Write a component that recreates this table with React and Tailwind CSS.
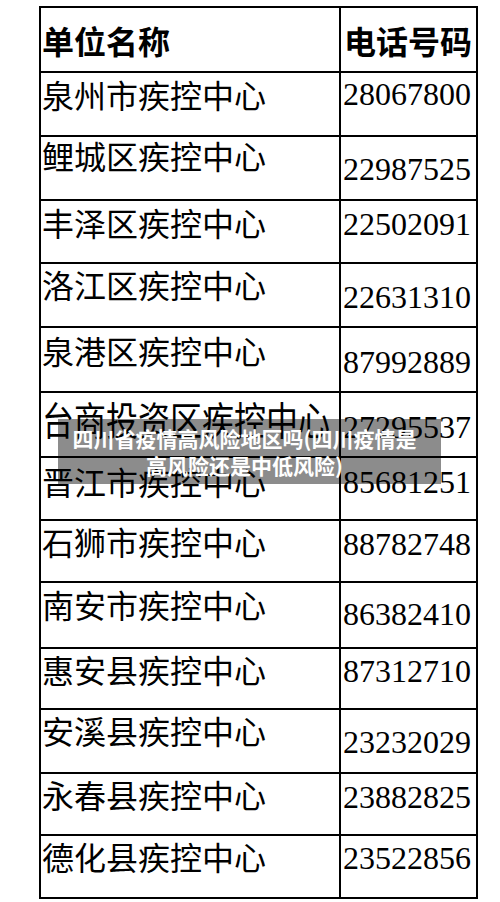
import React from "react";

const rows = [
  { name: "泉州市疾控中心", phone: "28067800", h: "h-[64px]", np: "pt-[5px]", pp: "pt-[5px]" },
  { name: "鲤城区疾控中心", phone: "22987525", h: "h-[64px]", np: "pt-[2px]", pp: "pt-[16px]" },
  { name: "丰泽区疾控中心", phone: "22502091", h: "h-[63px]", np: "pt-[5px]", pp: "pt-[7px]" },
  { name: "洛江区疾控中心", phone: "22631310", h: "h-[64px]", np: "pt-[4px]", pp: "pt-[17px]" },
  { name: "泉港区疾控中心", phone: "87992889", h: "h-[65px]", np: "pt-[6px]", pp: "pt-[18px]" },
  { name: "台商投资区疾控中心", phone: "27295537", h: "h-[65px]", np: "pt-[6px]", pp: "pt-[18px]", tall: true },
  { name: "晋江市疾控中心", phone: "85681251", h: "h-[63px]", np: "pt-[7px]", pp: "pt-[8px]" },
  { name: "石狮市疾控中心", phone: "88782748", h: "h-[62px]", np: "pt-[4px]", pp: "pt-[7px]" },
  { name: "南安市疾控中心", phone: "86382410", h: "h-[66px]", np: "pt-[5px]", pp: "pt-[15px]" },
  { name: "惠安县疾控中心", phone: "87312710", h: "h-[61px]", np: "pt-[4px]", pp: "pt-[6px]" },
  { name: "安溪县疾控中心", phone: "23232029", h: "h-[64px]", np: "pt-[4px]", pp: "pt-[16px]" },
  { name: "永春县疾控中心", phone: "23882825", h: "h-[62px]", np: "pt-[4px]", pp: "pt-[7px]" },
  { name: "德化县疾控中心", phone: "23522856", h: "h-[63px]", np: "pt-[4px]", pp: "pt-[6px]" },
];

const cjk = "font-['Noto_Sans_CJK_SC','Noto_Sans_CJK_JP',sans-serif]";
const serif = "font-['Liberation_Serif','Times_New_Roman',serif]";

export default function App() {
  return (
    <div className="relative h-[902px] w-[500px] overflow-hidden bg-white text-black">
      <div className="ml-[39px] mt-[6px] w-[439px] border-x-2 border-t-2 border-black">
        <div className="flex h-[65px] border-b-2 border-black">
          <div className={`w-[300px] shrink-0 border-r-2 border-black pl-[1px] pt-[16px] text-[32px] font-bold leading-none ${cjk}`}>
            单位名称
          </div>
          <div className={`flex-1 pl-[3px] pt-[16px] text-[32px] font-bold leading-none ${cjk}`}>
            电话号码
          </div>
        </div>
        {rows.map((r) => (
          <div key={r.phone} className={`flex border-b-2 border-black ${r.h}`}>
            <div className={`w-[300px] shrink-0 border-r-2 border-black pl-[1px] ${r.np}`}>
              <div
                className={`whitespace-nowrap text-[32px] leading-none ${cjk} ${
                  r.tall ? "origin-top scale-y-[1.2]" : ""
                }`}
              >
                {r.name}
              </div>
            </div>
            <div className={`flex-1 pl-[2px] text-[32px] leading-none ${serif} ${r.pp}`}>
              {r.phone}
            </div>
          </div>
        ))}
      </div>
      <div className="absolute left-[58px] top-[419px] flex h-[65px] w-[383px] items-center justify-center bg-black/45 pr-[10px]">
        <div className={`text-center text-[21px] font-bold leading-[27px] text-white ${cjk}`}>
          四川省疫情高风险地区吗(四川疫情是
          <br />
          高风险还是中低风险)
        </div>
      </div>
    </div>
  );
}
